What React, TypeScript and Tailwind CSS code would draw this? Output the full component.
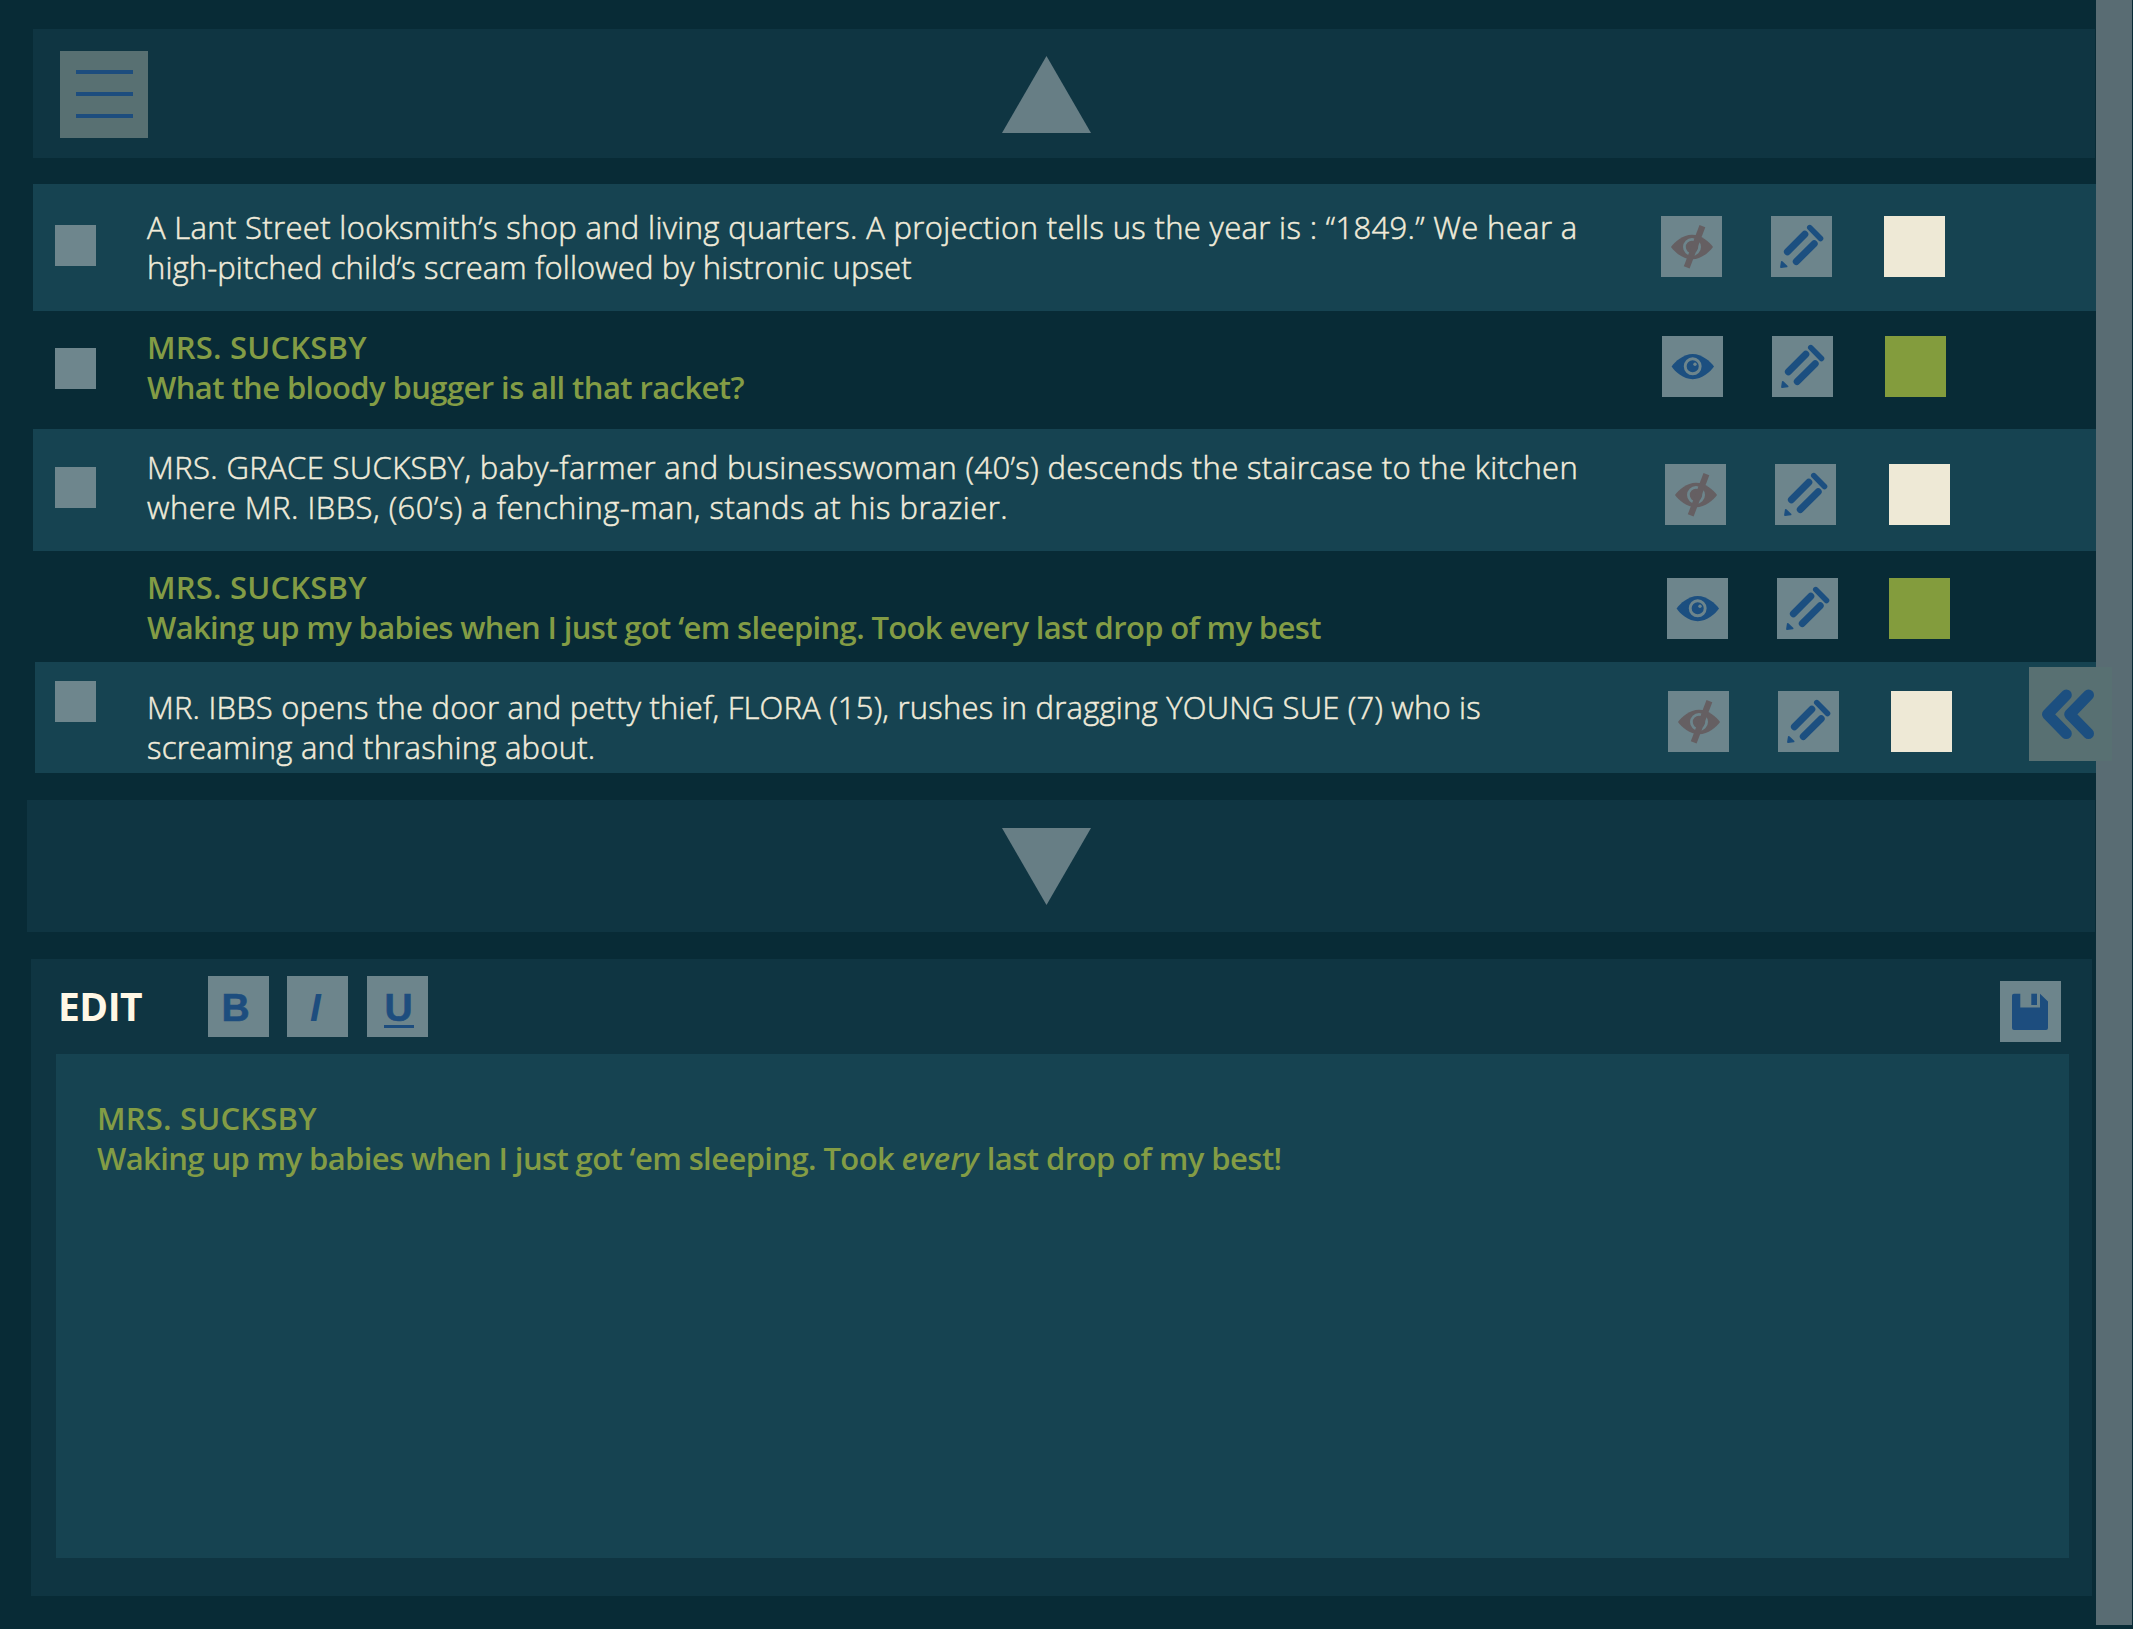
import React from "react";

function Pencil() {
  return (
    <svg viewBox="0 0 61 61" className="size-full" fill="none" stroke="#1c4f80" strokeLinecap="round">
      <path d="M16.4 35.8 33.8 18.2M25.3 45.5 43.2 27.7" strokeWidth="7" />
      <path d="M38.8 11.6 49.5 22.5" strokeWidth="5.6" />
      <path d="M10.8 46 15.6 50.4 10 51.2Z" strokeWidth="1.8" strokeLinejoin="round" fill="#1c4f80" />
    </svg>
  );
}

function EyeOpen() {
  return (
    <svg viewBox="0 0 61 61" className="size-full">
      <path d="M9.6 30.6C13 25.5 21.5 18 30.7 18S48.5 25.5 52 30.6C48.5 35.7 40 43.3 30.7 43.3S13 35.7 9.6 30.6Z" fill="#1c4f80" />
      <circle cx="30.7" cy="30.3" r="7.5" fill="#1c4f80" stroke="#6d858c" strokeWidth="2.9" />
      <circle cx="33" cy="28.2" r="1.7" fill="#6d858c" />
    </svg>
  );
}

function EyeOff() {
  return (
    <svg viewBox="0 0 61 61" className="size-full">
      <path d="M10 31C13.4 26 22 18.7 31 18.7S48.6 26 52 31C48.6 36 40 43.3 31 43.3S13.4 36 10 31Z" fill="#655f62" />
      <circle cx="31" cy="31" r="7.6" fill="#655f62" stroke="#6d858c" strokeWidth="2.8" />
      <path d="M41.4 10.2 25.7 51.4" stroke="#655f62" strokeWidth="6.2" />
    </svg>
  );
}

const narration = "text-[#f0ebda] font-light [-webkit-text-stroke:0.5px_#f0ebda]";
const dialogue = "text-[#839c45] font-semibold";

const rows = [
  {
    row: "ml-[33px] h-[127px] bg-[#164351]",
    check: "ml-[22px] mt-[41px]",
    text: "ml-[51px] mt-[23px]",
    tone: narration,
    lines: [
      ["A Lant Street looksmith’s shop and living quarters. A projection tells us the year is : “1849.” We hear a", "tracking-[0.343px]"],
      ["high-pitched child’s scream followed by histronic upset", "tracking-[0.12px]"],
    ],
    tools: "ml-[14px] mt-[32px]",
    swatch: "ml-[52px] bg-[#eee9d6]",
    visible: false,
  },
  {
    row: "ml-[33px] h-[118px]",
    check: "ml-[22px] mt-[37px]",
    text: "ml-[51px] mt-[16px]",
    tone: dialogue,
    lines: [
      ["MRS. SUCKSBY", "tracking-[0.2px]"],
      ["What the bloody bugger is all that racket?", "tracking-[-0.585px]"],
    ],
    tools: "ml-[15px] mt-[25px]",
    swatch: "ml-[52px] bg-[#839c3d]",
    visible: true,
  },
  {
    row: "ml-[33px] h-[122px] bg-[#164351]",
    check: "ml-[22px] mt-[38px]",
    text: "ml-[51px] mt-[18px]",
    tone: narration,
    lines: [
      ["MRS. GRACE SUCKSBY, baby-farmer and businesswoman (40’s) descends the staircase to the kitchen", "tracking-[0.38px]"],
      ["where MR. IBBS, (60’s) a fenching-man, stands at his brazier.", "tracking-[0.49px]"],
    ],
    tools: "ml-[18px] mt-[35px]",
    swatch: "ml-[53px] bg-[#eee9d6]",
    visible: false,
  },
  {
    row: "ml-[33px] h-[111px]",
    check: "ml-[22px] invisible",
    text: "ml-[51px] mt-[16px]",
    tone: dialogue,
    lines: [
      ["MRS. SUCKSBY", "tracking-[0.2px]"],
      ["Waking up my babies when I just got ‘em sleeping. Took every last drop of my best", "tracking-[-0.645px]"],
    ],
    tools: "ml-[20px] mt-[27px]",
    swatch: "ml-[51px] bg-[#839c3d]",
    visible: true,
  },
  {
    row: "ml-[35px] h-[111px] bg-[#164351]",
    check: "ml-[20px] mt-[19px]",
    text: "ml-[51px] mt-[25px]",
    tone: narration,
    lines: [
      ["MR. IBBS opens the door and petty thief, FLORA (15), rushes in dragging YOUNG SUE (7) who is", "tracking-[0.215px]"],
      ["screaming and thrashing about.", "tracking-[0.24px]"],
    ],
    tools: "ml-[21px] mt-[29px]",
    swatch: "ml-[52px] bg-[#eee9d6]",
    visible: false,
  },
];

export default function App() {
  return (
    <div className="relative flex h-[1629px] w-[2133px] overflow-hidden bg-[#082b36] font-['Open_Sans',sans-serif]">
      <main className="flex w-[2096px] flex-col">
        <header className="ml-[33px] mr-px mt-[29px] flex h-[129px] bg-[#0f3542]">
          <button className="ml-[27px] mt-[22px] flex h-[87px] w-[88px] flex-col gap-[18px] bg-[#587072] pl-[16px] pt-[19px]">
            <span className="h-[4px] w-[57px] bg-[#1d4d7e]" />
            <span className="h-[4px] w-[57px] bg-[#1d4d7e]" />
            <span className="h-[4px] w-[57px] bg-[#1d4d7e]" />
          </button>
          <svg viewBox="0 0 89 77" className="ml-[854px] mt-[27px] h-[77px] w-[89px]">
            <path d="M44.5 0 89 77H0Z" fill="#677e85" />
          </svg>
        </header>

        <section className="mt-[26px] flex flex-col">
          {rows.map((r, i) => (
            <div key={i} className={`flex items-start ${r.row}`}>
              <span className={`size-[41px] shrink-0 bg-[#6e868d] ${r.check}`} />
              <div className={`w-[1500px] shrink-0 whitespace-nowrap text-[31px] leading-[40px] ${r.text} ${r.tone}`}>
                {r.lines.map(([line, tracking]) => (
                  <p key={line} className={tracking}>{line}</p>
                ))}
              </div>
              <div className={`flex shrink-0 ${r.tools}`}>
                <button className="size-[61px] bg-[#6d858c]">{r.visible ? <EyeOpen /> : <EyeOff />}</button>
                <button className="ml-[49px] size-[61px] bg-[#6d858c]"><Pencil /></button>
                <span className={`size-[61px] ${r.swatch}`} />
              </div>
            </div>
          ))}
        </section>

        <div className="ml-[27px] mr-px mt-[27px] flex h-[132px] bg-[#0f3542]">
          <svg viewBox="0 0 89 77" className="ml-[975px] mt-[28px] h-[77px] w-[89px]">
            <path d="M0 0H89L44.5 77Z" fill="#677e85" />
          </svg>
        </div>

        <section className="ml-[31px] mr-[4px] mt-[27px] flex h-[637px] flex-col bg-[#0f3542]">
          <div className="flex h-[95px] items-start">
            <h2 className="ml-[27px] mt-[23px] w-[150px] text-[39px] font-bold leading-[48px] tracking-[-0.5px] text-[#fff8e6]">EDIT</h2>
            <button className="mt-[17px] size-[61px] bg-[#6d858c] pr-[6px] font-['Liberation_Sans',sans-serif] text-[39px] font-bold leading-[63px] text-[#1d4d7e] [-webkit-text-stroke:0.6px_#1d4d7e]">B</button>
            <button className="ml-[18px] mt-[17px] size-[61px] bg-[#6d858c] pr-[4px] font-['Liberation_Sans',sans-serif] text-[39px] font-bold italic leading-[63px] text-[#1d4d7e]">I</button>
            <button className="ml-[19px] mt-[17px] flex size-[61px] flex-col items-center bg-[#6d858c] pl-[2px] font-['Liberation_Sans',sans-serif] text-[39px] font-bold leading-[63px] text-[#1d4d7e] [-webkit-text-stroke:0.6px_#1d4d7e]">
              <span className="h-[49px]">U</span>
              <span className="h-[3px] w-[30px] bg-[#1d4d7e]" />
            </button>
            <button className="ml-auto mr-[31px] mt-[22px] size-[61px] bg-[#6d858c]">
              <svg viewBox="0 0 61 61" className="size-full" fill="#1d4d7e">
                <path d="M14 12.700H20.300V26.500H40V12.700L48 20.500V47Q48 49 46 49H14Q12 49 12 47V14.700Q12 12.700 14 12.700Z" />
                <path d="M31.300 12.700H37V24H31.300Z" />
              </svg>
            </button>
          </div>
          <div className={`ml-[25px] mr-[23px] h-[504px] whitespace-pre bg-[#164351] pl-[41px] pt-[44px] text-[31px] leading-[40px] ${dialogue}`}>
            <p className="tracking-[0.2px]">MRS. SUCKSBY</p>
            <p>
              <span className="tracking-[-0.605px]">Waking up my babies when I just got ‘em sleeping. Took </span>
              <em className="tracking-[0.4px]">every</em>
              <span className="tracking-[-0.55px]"> last drop of my best!</span>
            </p>
          </div>
        </section>
      </main>

      <aside className="h-[1625px] w-[36px] bg-[#596c73]" />

      <button className="absolute left-[2029px] top-[667px] h-[94px] w-[83px] bg-[#587072]">
        <svg viewBox="0 0 83 94" className="size-full" fill="none" stroke="#1c4f80" strokeWidth="11" strokeLinecap="round" strokeLinejoin="round">
          <path d="M37.3 28 18.500 47.300 37.300 66.600M59.500 28 40.700 47.300 59.500 66.600" />
        </svg>
      </button>
    </div>
  );
}
